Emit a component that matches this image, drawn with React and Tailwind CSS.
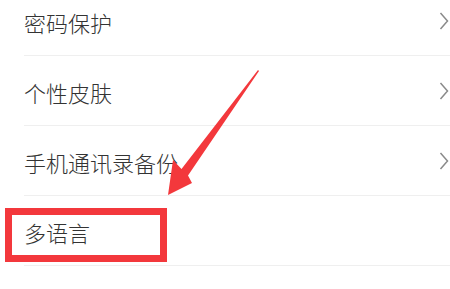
import React from "react";

const rows = [
  { label: "密码保护", chevron: true },
  { label: "个性皮肤", chevron: true },
  { label: "手机通讯录备份", chevron: true },
  { label: "多语言", chevron: false },
];

function Chevron() {
  return (
    <svg width="10" height="18" viewBox="0 0 10 18" fill="none">
      <path d="M1.5 1 L8.5 9 L1.5 17" stroke="#8a8a8a" strokeWidth="1.5" strokeLinejoin="miter" />
    </svg>
  );
}

export default function App() {
  return (
    <div
      className="relative w-[450px] h-[289px] overflow-hidden bg-white"
      style={{ fontFamily: '"Noto Sans CJK SC", "Noto Sans", sans-serif' }}
    >
      <div className="-mt-[14px] pl-[24px]">
        {rows.map((r) => (
          <div
            key={r.label}
            className="h-[70px] flex items-center justify-between border-b border-[#efefef] pr-[1px]"
          >
            <span className="text-[22px] leading-none font-light text-[#333333] mt-[2px]">{r.label}</span>
            {r.chevron && <Chevron />}
          </div>
        ))}
      </div>

      <div className="absolute left-[5px] top-[208px] w-[162px] h-[54px] border-[7px] border-[#f3383c]" />

      <svg className="absolute left-0 top-0" width="450" height="289" viewBox="0 0 450 289">
        <polygon
          points="168,195 173,160 181.5,169 258,70 259,71 188,175.5 192,183"
          fill="#f3383c"
        />
      </svg>
    </div>
  );
}
